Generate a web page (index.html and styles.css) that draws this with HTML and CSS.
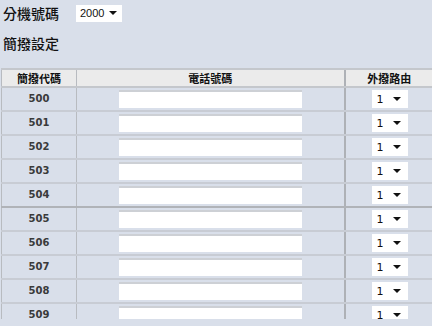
FILE: index.html
```html
<!DOCTYPE html>
<html lang="zh-Hant">
<head>
    <meta charset="UTF-8">
    <title>簡撥設定</title>
    <link rel="stylesheet" href="styles.css">
</head>
<body>
    <div class="page">
        <div class="ext-row">
            <span class="label">分機號碼</span>
            <div class="fake-select ext-select">
                <span>2000</span>
                <i class="caret"></i>
            </div>
        </div>
        <h2 class="section-title">簡撥設定</h2>

        <table class="speed-table">
            <thead>
                <tr>
                    <th class="col-code">簡撥代碼</th>
                    <th class="col-phone">電話號碼</th>
                    <th class="col-route">外撥路由</th>
                </tr>
            </thead>
            <tbody>
                <tr><td class="code">500</td><td><input class="phone" type="text"></td><td><div class="fake-select route"><span>1</span><i class="caret"></i></div></td></tr>
                <tr><td class="code">501</td><td><input class="phone" type="text"></td><td><div class="fake-select route"><span>1</span><i class="caret"></i></div></td></tr>
                <tr><td class="code">502</td><td><input class="phone" type="text"></td><td><div class="fake-select route"><span>1</span><i class="caret"></i></div></td></tr>
                <tr><td class="code">503</td><td><input class="phone" type="text"></td><td><div class="fake-select route"><span>1</span><i class="caret"></i></div></td></tr>
                <tr class="group-end"><td class="code">504</td><td><input class="phone" type="text"></td><td><div class="fake-select route"><span>1</span><i class="caret"></i></div></td></tr>
                <tr><td class="code">505</td><td><input class="phone" type="text"></td><td><div class="fake-select route"><span>1</span><i class="caret"></i></div></td></tr>
                <tr><td class="code">506</td><td><input class="phone" type="text"></td><td><div class="fake-select route"><span>1</span><i class="caret"></i></div></td></tr>
                <tr><td class="code">507</td><td><input class="phone" type="text"></td><td><div class="fake-select route"><span>1</span><i class="caret"></i></div></td></tr>
                <tr><td class="code">508</td><td><input class="phone" type="text"></td><td><div class="fake-select route"><span>1</span><i class="caret"></i></div></td></tr>
                <tr><td class="code">509</td><td><input class="phone" type="text"></td><td><div class="fake-select route"><span>1</span><i class="caret"></i></div></td></tr>
            </tbody>
        </table>
    </div>
</body>
</html>
```

FILE: styles.css
```css
/* base */
* {
    margin: 0;
    padding: 0;
    box-sizing: border-box;
}

html, body {
    background: #d9dfea;
}

body {
    font-family: "Liberation Sans", "Noto Sans CJK TC", sans-serif;
    color: #222;
    overflow: hidden;
}

.page {
    height: 319px;
    overflow: hidden;
    padding: 4px 0 0 1px;
}

/* extension selector */
.ext-row {
    display: flex;
    align-items: center;
    height: 18px;
    padding-left: 2px;
}

.label {
    font-family: "Noto Sans CJK TC", sans-serif;
    font-size: 14px;
    font-weight: 500;
    color: #111;
    width: 73px;
    line-height: 18px;
}

.section-title {
    font-family: "Noto Sans CJK TC", sans-serif;
    font-size: 14px;
    font-weight: 500;
    color: #111;
    line-height: 18px;
    padding: 12px 0 0 2px;
}

/* dropdown look-alike */
.fake-select {
    display: flex;
    align-items: center;
    justify-content: space-between;
    background: #fff;
    font-size: 11px;
    color: #111;
}

.ext-select {
    width: 46px;
    height: 17px;
    padding: 0 5px 0 4px;
}

.caret {
    width: 0;
    height: 0;
    border-left: 4px solid transparent;
    border-right: 4px solid transparent;
    border-top: 4px solid #111;
}

/* speed dial table */
.speed-table {
    width: 432px;
    margin-top: 16px;
    border-collapse: collapse;
    font-family: "DejaVu Sans", sans-serif;
}

.speed-table th {
    background: #ebebeb;
    height: 17px;
    font-family: "Noto Sans CJK TC", sans-serif;
    font-size: 11px;
    font-weight: bold;
    color: #111;
    border-top: 2px solid #c4c7cc;
    border-bottom: 2px solid #c4c7cc;
    border-left: 1px solid #b8bbc0;
}

.col-code {
    width: 75px;
}

.col-phone {
    width: 268px;
}

.col-route {
    border-left-width: 2px !important;
    border-left-color: #aeb1b6 !important;
}

.speed-table td {
    height: 24px;
    text-align: center;
    border-left: 1px solid #b8bbc0;
    border-bottom: 2px solid #c8ccd4;
}

.speed-table td:last-child {
    border-left: 2px solid #aeb1b6;
}

.speed-table tr.group-end td {
    border-bottom-color: #b0b3b8;
}

.code {
    font-size: 10px;
    font-weight: bold;
    color: #3a3a3a;
    padding-bottom: 1px;
}

.phone {
    display: block;
    width: 183px;
    height: 18px;
    margin: 0 auto;
    background: #fff;
    border: none;
    border-top: 2px solid #cdd0d5;
    outline: none;
}

.route {
    width: 36px;
    height: 18px;
    margin: 0 0 0 26px;
    padding: 0 7px 0 5px;
}
```
